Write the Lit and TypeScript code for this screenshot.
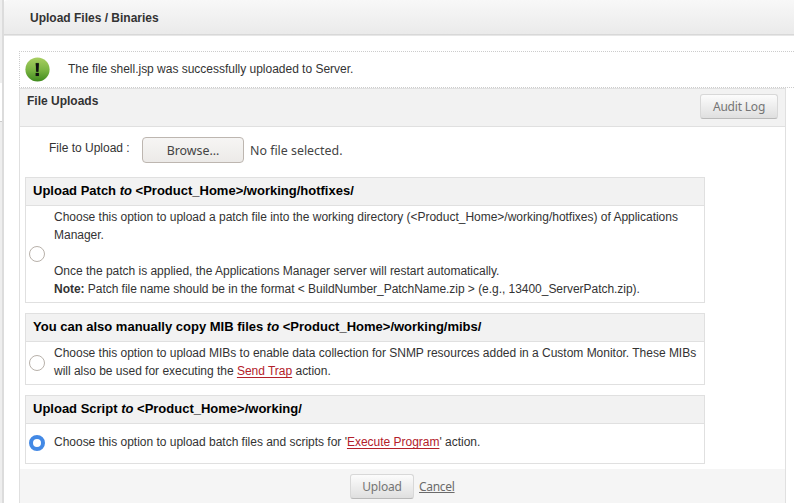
import { LitElement, html, css } from "lit";
import { customElement, property } from "lit/decorators.js";

@customElement("upload-option")
class UploadOption extends LitElement {
  @property() kind = "";
  @property() path = "";
  @property({ type: Boolean }) checked = false;

  static styles = css`
    :host { display: flex; flex-direction: column; box-sizing: border-box; width: 680px; border: 1px solid #e0e0e0; background: #fff; }
    .title { box-sizing: border-box; height: 28px; padding-left: 7px; border-bottom: 1px solid #e0e0e0; background: #f2f2f2; color: #000; font: bold 13px/25px "Liberation Sans", Arial, sans-serif; letter-spacing: 0; white-space: nowrap; }
    .body { display: flex; align-items: center; flex: 1; }
    .radio { box-sizing: border-box; flex: none; width: 16px; height: 16px; margin: 0 9px 0 3px; border: 1px solid #b8b1aa; border-radius: 50%; background: #fff; }
    .radio.on { border: 4px solid #4389e5; margin-bottom: 2px; }
    .text { white-space: nowrap; line-height: 18px; align-self: flex-start; padding-top: 2px; }
    .mark { display: flex; align-items: center; height: 100%; }
  `;
  render() {
    return html`
      <div class="title">${this.kind} <em>to</em> ${this.path}</div>
      <div class="body">
        <div class="mark"><div class="radio ${this.checked ? "on" : ""}"></div></div>
        <div class="text" part="text"><slot></slot></div>
      </div>`;
  }
}

@customElement("app-root")
class AppRoot extends LitElement {
  static styles = css`
    :host { display: flex; width: 794px; height: 503px; overflow: hidden; background: #fff; color: #333; font: 12px/18px "Liberation Sans", Arial, sans-serif; }
    .rail { box-sizing: border-box; flex: none; width: 4px; border-right: 2px solid #dcdcdc; background: linear-gradient(#eee 83px, #fff 83px, #fff 121px, #ccc 121px, #ccc 122px, #eee 122px); }
    .main { flex: 1; min-width: 0; display: flex; flex-direction: column; }
    .head { box-sizing: border-box; height: 36px; flex: none; padding-left: 26px; border-bottom: 1px solid #e7e7e7; box-shadow: inset 0 -1px #d8d8d8; border-top-left-radius: 4px; background: linear-gradient(#f8f8f8, #eaeaea); font-weight: bold; line-height: 37px; }
    .content { flex: 1; display: flex; flex-direction: column; padding: 15px 0 0 15px; }
    .notice { box-sizing: border-box; height: 37px; flex: none; display: flex; align-items: center; border: 1px dotted #ccc; border-right: 0; padding-left: 5px; gap: 18px; letter-spacing: -.015px; }
    .notice svg { display: block; }
    .notice span { padding-bottom: 2px; }
    .panel { box-sizing: border-box; width: 767px; flex: 1; display: flex; flex-direction: column; border: 1px solid #e0e0e0; border-bottom: 0; }
    .bar { box-sizing: border-box; height: 38px; flex: none; display: flex; justify-content: space-between; align-items: flex-start; padding: 3px 7px 0; border-bottom: 1px solid #e0e0e0; background: #f2f2f2; }
    .bar b { display: block; }
    .btn { box-sizing: border-box; height: 25px; border: 1px solid #d8d8d8; border-bottom-color: #b9b9b9; border-radius: 3px; background: linear-gradient(#fcfcfc, #dfdfdf); color: #757575; text-align: center; font: 12px/24px "Noto Sans", sans-serif; letter-spacing: -.2px; white-space: nowrap; }
    .audit { width: 78px; margin: 2px 0 0; }
    .file { height: 50px; flex: none; display: flex; align-items: flex-start; padding-left: 29px; }
    .label { width: 93px; padding-top: 12px; }
    .browse { box-sizing: border-box; width: 102px; height: 26px; margin: 10px 6px 0 0; border: 1px solid #bdb6b0; border-radius: 4px; background: linear-gradient(#f6f5f4, #eceae8); text-align: center; }
    .browse, .none { font: 12.4px/25px "Noto Sans", sans-serif; color: #444; }
    .none { margin-top: 11px; white-space: nowrap; }
    .options { display: flex; flex-direction: column; gap: 10px; padding: 0 5px 5px; flex: none; letter-spacing: -.015px; }
    .patch { height: 126px; }
    .note { letter-spacing: -.036px; }
    .mibs { height: 72px; }
    .script { height: 69px; }
    .script::part(text) { padding-top: 9px; }
    .link { color: #b3202a; text-decoration: underline; text-decoration-thickness: 1px; text-underline-offset: 2px; text-decoration-skip-ink: none; }
    .foot { flex: 1; display: flex; align-items: flex-start; justify-content: flex-start; gap: 5px; padding: 5px 0 0 330px; background: #f5f5f5; }
    .upload { width: 64px; }
    .cancel { font: 12px/25px "Noto Sans", sans-serif; letter-spacing: -.3px; color: #6b6b6b; text-decoration: underline; }
  `;
  render() {
    return html`
      <div class="rail"></div>
      <div class="main">
        <div class="head">Upload Files / Binaries</div>
        <div class="content">
          <div class="notice">
            <svg width="25" height="25" viewBox="0 0 25 25">
              <defs><linearGradient id="g" x2="0" y2="1"><stop stop-color="#a9cf62"/><stop offset=".5" stop-color="#7db644"/><stop offset="1" stop-color="#3f8a1d"/></linearGradient></defs>
              <circle cx="12.5" cy="12.5" r="12.1" fill="url(#g)"/>
              <path d="M10.8 6.3h3l-.5 8.5h-2zM10.8 16h3v3h-3z" fill="#111" stroke="#4a8424" stroke-opacity=".5"/>
              <path d="M10.8 6.3h3l-.5 8.5h-2zM10.8 16h3v3h-3z" fill="#111"/>
            </svg>
            <span>The file shell.jsp was successfully uploaded to Server.</span>
          </div>
          <div class="panel">
            <div class="bar"><b>File Uploads</b><div class="btn audit">Audit Log</div></div>
            <div class="file">
              <div class="label">File to Upload :</div>
              <div class="browse">Browse…</div>
              <div class="none">No file selected.</div>
            </div>
            <div class="options">
              <upload-option class="patch" kind="Upload Patch" path="<Product_Home>/working/hotfixes/">Choose this option to upload a patch file into the working directory (&lt;Product_Home&gt;/working/hotfixes) of Applications<br>Manager.<br><br>Once the patch is applied, the Applications Manager server will restart automatically.<br><span class="note"><b>Note:</b> Patch file name should be in the format &lt; BuildNumber_PatchName.zip &gt; (e.g., 13400_ServerPatch.zip).</span></upload-option>
              <upload-option class="mibs" kind="You can also manually copy MIB files" path="<Product_Home>/working/mibs/">Choose this option to upload MIBs to enable data collection for SNMP resources added in a Custom Monitor. These MIBs<br>will also be used for executing the <span class="link">Send Trap</span> action.</upload-option>
              <upload-option class="script" checked kind="Upload Script" path="<Product_Home>/working/">Choose this option to upload batch files and scripts for '<span class="link">Execute Program</span>' action.</upload-option>
            </div>
            <div class="foot"><div class="btn upload">Upload</div><span class="cancel">Cancel</span></div>
          </div>
        </div>
      </div>`;
  }
}
